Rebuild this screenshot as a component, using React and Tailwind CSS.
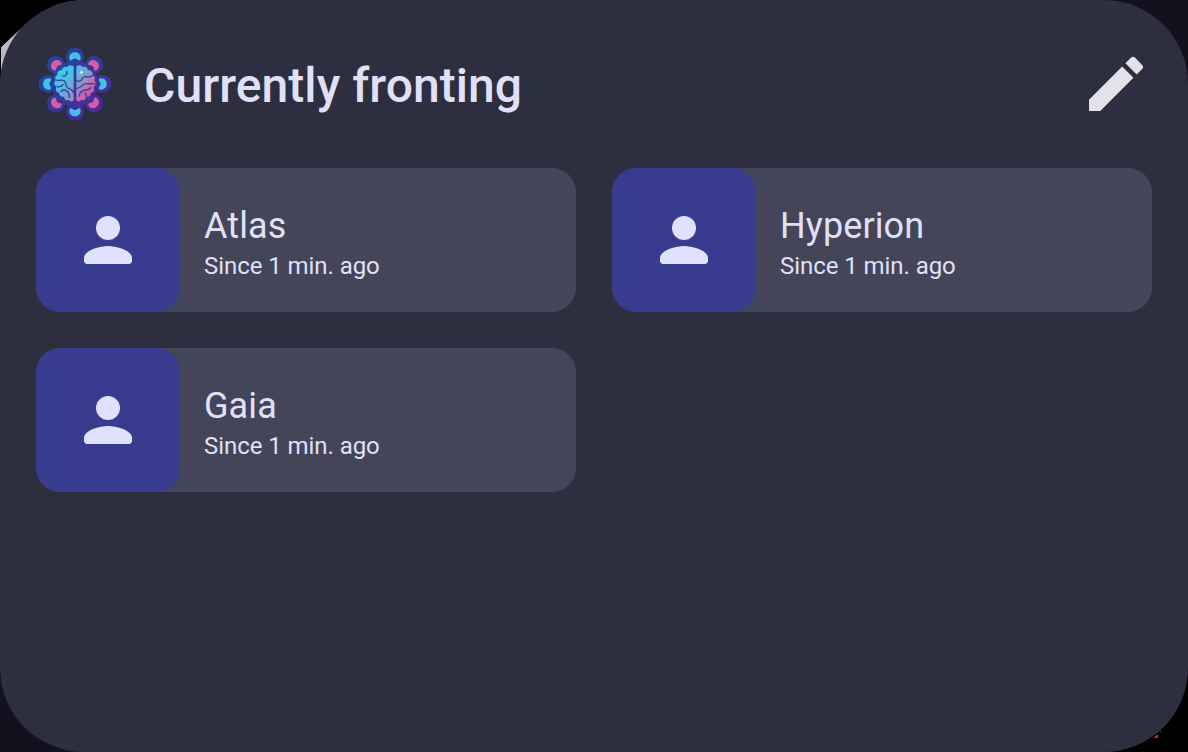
const people = ["Atlas", "Hyperion", "Gaia"];

function Logo() {
  const petals = [
    [135, 50, 0, "#43c0ea"], [192, 75, 45, "#d95aab"], [217, 132, 90, "#43c0ea"], [192, 190, 135, "#d95aab"],
    [135, 215, 180, "#43c0ea"], [78, 190, 225, "#d95aab"], [53, 132, 270, "#43c0ea"], [78, 75, 315, "#d95aab"],
  ];
  return (
    <svg className="size-[72px] shrink-0" viewBox="27 24 216 216">
      <defs>
        <linearGradient id="base" gradientUnits="userSpaceOnUse" x1="60" y1="60" x2="215" y2="205">
          <stop offset="0.1" stopColor="#24449a" />
          <stop offset="1" stopColor="#4c2a96" />
        </linearGradient>
        <linearGradient id="brain" gradientUnits="userSpaceOnUse" x1="90" y1="95" x2="182" y2="175">
          <stop offset="0.2" stopColor="#42c4ea" />
          <stop offset="0.58" stopColor="#8c96cb" />
          <stop offset="0.88" stopColor="#dc56a6" />
        </linearGradient>
      </defs>
      <g fill="url(#base)">
        <circle cx="135" cy="132" r="70" />
        {petals.map(([x, y, r]) => <circle key={r} cx={x} cy={y} r="27" />)}
      </g>
      {petals.map(([x, y, r, c]) => (
        <path key={r} transform={`translate(${x} ${y}) rotate(${r})`} fill={c} d="M-17 3C-17-19 17-19 17 3C17 11 12 12 8 9C4 4-4 4-8 9C-12 12-17 11-17 3Z" />
      ))}
      <path fill="url(#brain)" d="M131 79C122 72 113 77 112 81C101 79 97 84 96 90C86 90 80 97 82 104C75 108 74 115 77 120C71 127 73 136 79 140C75 151 80 157 87 158C88 167 94 172 101 170C104 180 111 183 117 180C122 187 128 184 131 181ZM139 79C148 72 157 77 158 81C169 79 173 84 174 90C184 90 190 97 188 104C195 108 196 115 193 120C199 127 197 136 191 140C195 151 190 157 183 158C182 167 176 172 169 170C166 180 159 183 153 180C148 187 142 184 139 181Z" />
      <g fill="none" stroke="#383d98" strokeWidth="4" strokeLinecap="round" strokeLinejoin="round">
        <path d="M111 94c1 9-4 15-12 14M78 120c10 4 18-3 25 3c7 6 2 18 12 22c8 3 14 5 15 13M81 140c8 2 14-2 18-6M93 154c8-6 15-4 20 1c5 5 6 10 5 17M140 122c8 4 14 1 16-5c3-7 10-8 16-6c6 1 12-1 16-5M140 145c15 0 15-13 27-14c9-1 14 3 24-1M148 168c1-14 10-17 20-18c8-1 12-4 15-7M165 159c3 3 4 6 4 9" />
      </g>
      <path fill="#e9fbff" d="m154 90 2 5 5 2-5 2-2 5-2-5-5-2 5-2Z" />
    </svg>
  );
}

function Corners() {
  return (
    <svg className="pointer-events-none absolute inset-0" width="1188" height="752" viewBox="0 0 1188 752">
      <path fill="#b9b7c9" d="M1 84V47L18 31L40 14L70 1L84 0Z" />
      <path fill="#000000" d="M0 0H84Q50 2 32 18L19 30L1 47H0Z" />
      <path fill="#13111d" d="M1100 0H1188V90Z" />
      <path fill="#13111d" d="M0 660V752H90Z" />
      <path fill="#2d2e3f" d="M84 0H1104A84 84 0 0 1 1188 84V668A84 84 0 0 1 1104 752H84A84 84 0 0 1 0 668V84A84 84 0 0 1 84 0Z" />
      <path fill="#ff1018" d="M1154 738v-1h1v-1h1v-1h2v3ZM1160 731h1v1h-1Z" />
    </svg>
  );
}

function Card({ name }) {
  return (
    <article className="flex h-36 overflow-hidden rounded-3xl bg-[#444558]">
      <div className="flex size-36 shrink-0 items-center justify-center rounded-3xl bg-[#383c8f]">
        <svg className="size-[72px] fill-[#e0e0ff]" viewBox="0 0 24 24">
          <circle cx="12" cy="8" r="4" />
          <path d="M12 14c-2.67 0-8 1.34-8 4v1c0 .55.45 1 1 1h14c.55 0 1-.45 1-1v-1c0-2.66-5.33-4-8-4z" />
        </svg>
      </div>
      <div className="flex flex-col pl-6 pt-[37px]">
        <h2 className="text-4xl leading-[42px] tracking-[0.1px]">{name}</h2>
        <p className="mt-[5px] text-2xl leading-7 tracking-[-0.06px]">Since 1 min. ago</p>
      </div>
    </article>
  );
}

export default function App() {
  return (
    <div className="relative h-[752px] w-[1188px] overflow-hidden bg-black font-['Roboto',sans-serif] text-[#e0e0f9]">
      <Corners />
      <main className="relative px-9 pt-12">
        <header className="flex h-[72px] items-center pl-[3px]">
          <Logo />
          <h1 className="ml-[33px] pt-1 text-5xl font-medium tracking-[0.06px]">Currently fronting</h1>
          <svg className="ml-auto size-[72px] fill-[#e5e1e9]" viewBox="0 0 24 24">
            <path d="M3 17.25V21h3.75L17.81 9.94l-3.75-3.75L3 17.25zM20.71 7.04a.996.996 0 0 0 0-1.41l-2.34-2.34a.996.996 0 0 0-1.41 0l-1.83 1.83 3.75 3.75 1.83-1.83z" />
          </svg>
        </header>
        <section className="mt-12 grid grid-cols-2 gap-9">
          {people.map((name) => <Card key={name} name={name} />)}
        </section>
      </main>
    </div>
  );
}
